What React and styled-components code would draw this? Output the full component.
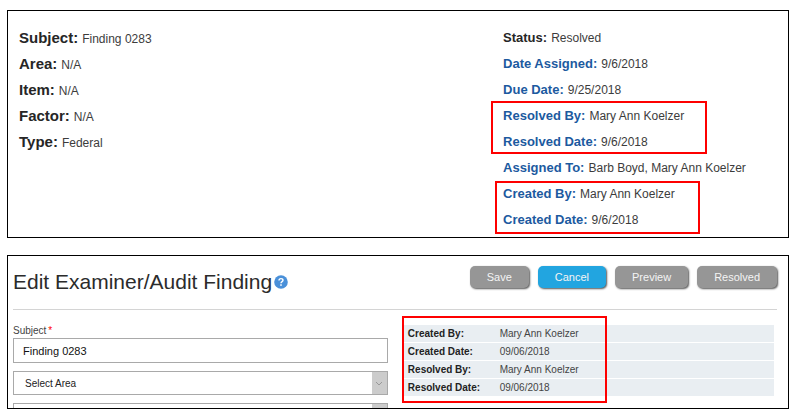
import React from "react";
import styled, { createGlobalStyle } from "styled-components";

const GlobalStyle = createGlobalStyle`
  *, *::before, *::after { box-sizing: border-box; }
  body {
    margin: 0;
    background: #fff;
    color: #333;
    font-family: "Liberation Sans", Arial, sans-serif;
  }
`;

const Page = styled.main`
  display: flex;
  flex-direction: column;
  gap: 17px;
  padding: 10px 11px 8px 7px;
`;

const Panel = styled.section`
  border: 1px solid #000;
  background: #fff;
`;

const DetailPanel = styled(Panel)`
  display: grid;
  grid-template-columns: 9fr 5fr;
  padding: 14px 16px 4px 11px;
`;

const DetailList = styled.dl`
  margin: 0;
`;

const DetailRow = styled.div`
  display: flex;
  align-items: baseline;
  gap: 4px;
  height: 26px;
  line-height: 26px;
  white-space: nowrap;
`;

const Term = styled.dt`
  font-weight: bold;
  font-size: ${(p) => (p.$large ? 15 : 13)}px;
  color: ${(p) => (p.$accent ? "#1c5a9f" : "#262626")};
`;

const Value = styled.dd`
  margin: 0;
  font-size: 12px;
  color: #3c3c3c;
`;

const Marked = styled.div`
  position: relative;
`;

const Callout = styled.span`
  position: absolute;
  top: ${(p) => p.$top}px;
  left: ${(p) => p.$left}px;
  width: ${(p) => p.$width}px;
  height: ${(p) => p.$height}px;
  border: 2px solid #fe0000;
  pointer-events: none;
`;

const EditPanel = styled(Panel)`
  padding: 0 11px 0 5px;
`;

const Header = styled.header`
  display: flex;
  justify-content: space-between;
  align-items: flex-start;
  min-height: 54px;
  padding-top: 10px;
  border-bottom: 1px solid #d4d4d4;
`;

const Title = styled.h1`
  display: flex;
  align-items: center;
  gap: 2px;
  margin: 0;
  padding-top: 4px;
  font-size: 21px;
  line-height: 24px;
  font-weight: normal;
  color: #2b2b2b;
  white-space: nowrap;
`;

const Actions = styled.div`
  display: flex;
  gap: 9px;
`;

const ActionButton = styled.button`
  height: 22px;
  padding: 0 17px;
  border: 0;
  border-radius: 5px;
  background: ${(p) => (p.$primary ? "#22a5e0" : "#969696")};
  box-shadow: 1px 1px 2px #555;
  color: #f4f4f4;
  font: 11px/22px "Liberation Sans", Arial, sans-serif;
`;

const Columns = styled.div`
  display: grid;
  grid-template-columns: 101fr 100fr;
  gap: 15px;
  padding-right: 3px;
`;

const Form = styled.form`
  padding-top: 14px;
`;

const FieldLabel = styled.label`
  display: block;
  font-size: 10px;
  line-height: 14px;
  color: #444;
`;

const Required = styled.span`
  margin-left: 2px;
  color: #f00;
`;

const TextInput = styled.input`
  display: block;
  width: 100%;
  height: 25px;
  margin-bottom: 8px;
  padding: 0 9px;
  border: 1px solid #a9a9a9;
  border-radius: 0;
  background: #fff;
  color: #111;
  font: 11px "Liberation Sans", Arial, sans-serif;
`;

const SelectBox = styled.div`
  position: relative;
  height: 24px;
  margin-bottom: 8px;
`;

const Select = styled.select`
  appearance: none;
  display: block;
  width: 100%;
  height: 100%;
  padding: 0 20px 0 11px;
  border: 1px solid #a9a9a9;
  border-radius: 0;
  background: #fff;
  color: #222;
  font: 10px "Liberation Sans", Arial, sans-serif;
`;

const Arrow = styled.span`
  position: absolute;
  top: 1px;
  right: 1px;
  bottom: 1px;
  width: 15px;
  display: grid;
  place-items: center;
  background: #ccc;
  pointer-events: none;
`;

const Clip = styled.div`
  height: 5px;
  overflow: hidden;
`;

const History = styled.div`
  position: relative;
  margin-top: 15px;
  align-self: start;
`;

const HistoryTable = styled.table`
  width: 100%;
  table-layout: fixed;
  border-collapse: collapse;
  font-size: 10px;
  line-height: 17px;

  tr {
    background: #e9eef2;
    border-bottom: 1px solid #fff;
  }
  th {
    width: 25%;
    padding: 0 0 0 5px;
    text-align: left;
    color: #222;
    white-space: nowrap;
  }
  td {
    padding: 0 0 0 4px;
    color: #444;
  }
`;

function HelpIcon() {
  return (
    <svg width="14" height="14" viewBox="0 0 14 14" role="img" aria-label="Help">
      <circle cx="7" cy="7" r="6.8" fill="#4a90d9" />
      <path
        d="M5 5.5C5 4.2 5.8 3.6 7 3.6S9 4.3 9 5.3C9 6.7 7 6.6 7 8.3"
        fill="none"
        stroke="#fff"
        strokeWidth="1.4"
      />
      <rect x="6.2" y="9.3" width="1.6" height="1.5" fill="#fff" />
    </svg>
  );
}

function Details({ rows, large }) {
  return (
    <DetailList>
      {rows.map(([term, value, plain]) => (
        <DetailRow key={term}>
          <Term $large={large} $accent={!large && !plain}>{term}:</Term>
          <Value>{value}</Value>
        </DetailRow>
      ))}
    </DetailList>
  );
}

function Dropdown({ label }) {
  return (
    <SelectBox>
      <Select aria-label={label}>
        <option>{label}</option>
      </Select>
      <Arrow>
        <svg width="8" height="5" viewBox="0 0 8 5" aria-hidden="true">
          <path d="M1 1l3 3 3-3" fill="none" stroke="#999" />
        </svg>
      </Arrow>
    </SelectBox>
  );
}

const person = "Mary Ann Koelzer";

const history = [
  ["Created By:", person],
  ["Created Date:", "09/06/2018"],
  ["Resolved By:", person],
  ["Resolved Date:", "09/06/2018"],
];

export default function App() {
  return (
    <>
      <GlobalStyle />
      <Page>
        <DetailPanel>
          <Details
            large
            rows={[
              ["Subject", "Finding 0283"],
              ["Area", "N/A"],
              ["Item", "N/A"],
              ["Factor", "N/A"],
              ["Type", "Federal"],
            ]}
          />
          <div>
            <Details
              rows={[
                ["Status", "Resolved", true],
                ["Date Assigned", "9/6/2018"],
                ["Due Date", "9/25/2018"],
              ]}
            />
            <Marked>
              <Details rows={[["Resolved By", person], ["Resolved Date", "9/6/2018"]]} />
              <Callout $top={-2} $left={-12} $width={216} $height={53} />
            </Marked>
            <Details rows={[["Assigned To", "Barb Boyd, Mary Ann Koelzer"]]} />
            <Marked>
              <Details rows={[["Created By", person], ["Created Date", "9/6/2018"]]} />
              <Callout $top={0} $left={-8} $width={205} $height={53} />
            </Marked>
          </div>
        </DetailPanel>

        <EditPanel>
          <Header>
            <Title>
              Edit Examiner/Audit Finding
              <HelpIcon />
            </Title>
            <Actions>
              <ActionButton type="button">Save</ActionButton>
              <ActionButton type="button" $primary>Cancel</ActionButton>
              <ActionButton type="button">Preview</ActionButton>
              <ActionButton type="button">Resolved</ActionButton>
            </Actions>
          </Header>
          <Columns>
            <Form>
              <FieldLabel htmlFor="subject">
                Subject<Required>*</Required>
              </FieldLabel>
              <TextInput id="subject" defaultValue="Finding 0283" />
              <Dropdown label="Select Area" />
              <Clip>
                <Dropdown label="Select Item" />
              </Clip>
            </Form>
            <History>
              <HistoryTable>
                <tbody>
                  {history.map(([name, value]) => (
                    <tr key={name}>
                      <th scope="row">{name}</th>
                      <td>{value}</td>
                    </tr>
                  ))}
                </tbody>
              </HistoryTable>
              <Callout $top={-9} $left={-1} $width={205} $height={87} />
            </History>
          </Columns>
        </EditPanel>
      </Page>
    </>
  );
}
